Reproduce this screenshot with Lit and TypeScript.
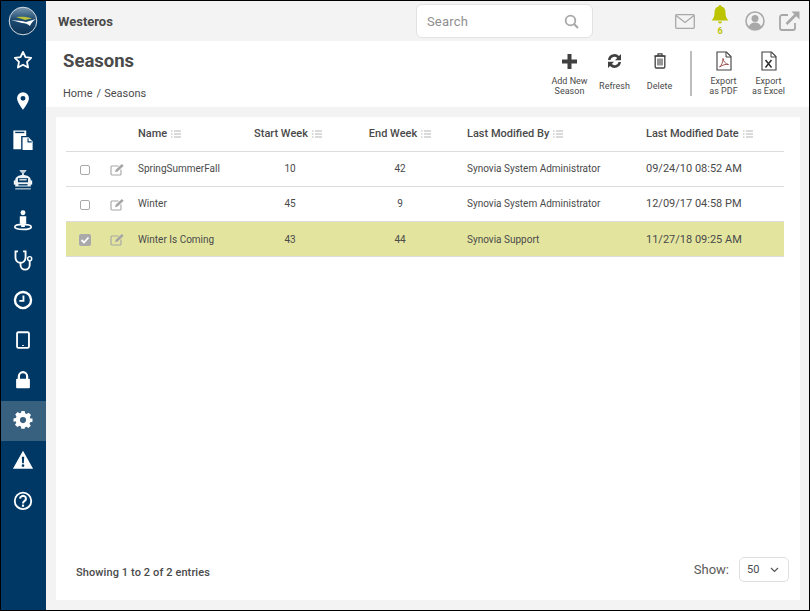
import { LitElement, html, css, svg } from "lit";
import { customElement } from "lit/decorators.js";

const navIcons = [
  svg`<path d="M12 3.200l2.700 5.700 6.200.8-4.500 4.300 1.100 6.200L12 17.200l-5.500 3 1.100-6.200L3.100 9.700l6.200-.8z" fill="none" stroke="#fff" stroke-width="2" stroke-linejoin="round"/>`,
  svg`<path fill-rule="evenodd" d="M12 3.500a6.500 6.500 0 0 0-6.500 6.500c0 4.400 6.500 12.500 6.500 12.500S18.500 14.400 18.500 10A6.500 6.500 0 0 0 12 3.500zm0 4a2.700 2.700 0 1 1 0 5.400 2.700 2.700 0 0 1 0-5.400z" fill="#fff"/>`,
  svg`<path d="M1.500 1.500h14v6H10v14.500H1.500z" fill="#fff"/><rect x="3.500" y="3" width="10" height="1.500" fill="#003865"/><path d="M11.500 9H18l4.500 4.500V23h-11z" fill="#fff"/><path d="M17.500 10v4h4" fill="none" stroke="#003865" stroke-width="1.200"/>`,
  svg`<path d="M8 1h8l-2 3h-4z" fill="#c8d3dc"/><rect x="11" y="4" width="2" height="3" fill="#dfe6eb"/><path d="M3.500 12c0-3 3.500-5.500 8.500-5.500s8.500 2.500 8.500 5.500v7h-17z" fill="#eef2f5"/><rect x="6.500" y="10" width="11" height="4.500" fill="#003865"/><rect x="8" y="11" width="8" height="1.500" fill="#dfe6eb"/><rect x="2" y="12.500" width="2" height="4.500" fill="#fff"/><rect x="20" y="12.500" width="2" height="4.500" fill="#fff"/><rect x="3.500" y="21" width="17" height="1.300" fill="#c8d3dc"/><rect x="7" y="16.500" width="10" height="1.500" fill="#003865"/>`,
  svg`<circle cx="12" cy="4" r="2.700" fill="#fff"/><path d="M8.500 8h7v8H14v3.500h-4V16H8.500z" fill="#fff"/><ellipse cx="12" cy="19.500" rx="9" ry="2.800" fill="none" stroke="#fff" stroke-width="1.800"/>`,
  svg`<path d="M6.500 2.500H3.800v7a5.500 5.500 0 0 0 11 0v-7h-2.700" fill="none" stroke="#fff" stroke-width="2"/><path d="M9.300 15v2.500a5 5 0 0 0 10 0V13" fill="none" stroke="#fff" stroke-width="2"/><circle cx="19.300" cy="10.500" r="2.200" fill="none" stroke="#fff" stroke-width="1.600"/>`,
  svg`<circle cx="12" cy="12" r="8.800" fill="none" stroke="#fff" stroke-width="2.600"/><path d="M12.500 7v6H8" fill="none" stroke="#fff" stroke-width="2"/>`,
  svg`<rect x="5.500" y="3.500" width="13" height="17" rx="1.500" fill="none" stroke="#fff" stroke-width="2"/><rect x="11" y="17.500" width="2" height="1" fill="#fff"/>`,
  svg`<path d="M7.500 11V8a4.500 4.500 0 0 1 9 0v3" fill="none" stroke="#fff" stroke-width="2.400"/><rect x="4.500" y="10.500" width="15" height="10.500" rx="1" fill="#fff"/>`,
  svg`<path fill-rule="evenodd" d="M10 2h4l.6 2.800 1.800.8 2.500-1.500 2.800 2.800-1.500 2.500.8 1.800L23.500 11v4l-2.800.6-.8 1.800 1.500 2.500-2.800 2.800-2.500-1.500-1.800.8L14 23.500h-4l-.6-2.800-1.800-.8-2.500 1.500-2.800-2.800 1.500-2.500-.8-1.800L.5 15v-4l2.800-.6.8-1.800L2.600 6.100l2.800-2.800 2.500 1.500 1.800-.8zM12 9.300a3.700 3.700 0 1 0 0 7.400 3.700 3.700 0 0 0 0-7.400z" fill="#fff" transform="translate(1.200 .4) scale(.9)"/>`,
  svg`<path fill-rule="evenodd" d="M12 2L23 21.500H1zM10.700 8.500l.4 7h1.800l.4-7zM12 16.500a1.500 1.500 0 1 0 0 3 1.500 1.500 0 0 0 0-3z" fill="#fff"/>`,
  svg`<circle cx="12" cy="13" r="9" fill="none" stroke="#fff" stroke-width="2"/><path d="M8.800 10.500a3.200 3 0 1 1 5 2.500c-1.200.8-1.800 1.300-1.800 2.800" fill="none" stroke="#fff" stroke-width="2.200"/><rect x="10.800" y="17" width="2.400" height="2.400" fill="#fff"/>`,
];

type Row = { name: string; start: string; end: string; by: string; date: string; sel?: boolean };
const rows: Row[] = [
  { name: "SpringSummerFall", start: "10", end: "42", by: "Synovia System Administrator", date: "09/24/10 08:52 AM" },
  { name: "Winter", start: "45", end: "9", by: "Synovia System Administrator", date: "12/09/17 04:58 PM" },
  { name: "Winter Is Coming", start: "43", end: "44", by: "Synovia Support", date: "11/27/18 09:25 AM", sel: true },
];

const sortIcon = html`<svg class="sort" viewBox="0 0 10 8" width="10" height="8"><path d="M0 1h1.500M0 4h1.500M0 7h1.500M3 1h7M3 4h7M3 7h7" stroke="#b5b5b5" stroke-width="1" fill="none"/></svg>`;
const editIcon = html`<svg class="edit" viewBox="0 0 15 13" width="15" height="13"><path d="M11 6.500V11a1 1 0 0 1-1 1H2a1 1 0 0 1-1-1V4a1 1 0 0 1 1-1h6.500" fill="none" stroke="#a5a5a5" stroke-width="1.100"/><path d="M5 9.300l.7-2.500L11.800 1l1.900 1.800-6.100 5.800z" fill="#a5a5a5"/></svg>`;

@customElement("app-root")
export class AppRoot extends LitElement {
  static styles = css`
    :host { display: block; width: 810px; height: 611px; font-family: Roboto, "Liberation Sans", sans-serif; color: #4a4a4a; }
    * { box-sizing: border-box; }
    .frame { width: 810px; height: 611px; border: 1px solid #000; display: flex; background: #f3f3f3; overflow: hidden; }
    .side { width: 45px; flex: none; background: #003865; display: flex; flex-direction: column; }
    .logo { height: 40px; display: flex; align-items: center; justify-content: center; padding-right: 1px; }
    .nav { height: 40px; display: flex; align-items: center; justify-content: center; }
    .nav svg { margin: -2px 1px 0 0; }
    .nav.active { background: #38607f; }
    .main { flex: 1; display: flex; flex-direction: column; min-width: 0; }
    .top { height: 40px; flex: none; display: flex; align-items: center; }
    .brand { margin-left: 12px; font-size: 13px; font-weight: 700; color: #4a4a4a; }
    .search { margin-left: 303px; width: 177px; height: 34px; background: #fff; border: 1px solid #e2e2e2; border-radius: 6px; display: flex; align-items: center; justify-content: space-between; padding: 0 13px 0 10px; font-size: 13px; color: #8f8f8f; letter-spacing: .2px; }
    .top-icons { margin-left: auto; display: flex; align-items: center; height: 40px; }
    .mail { margin-right: 15px; }
    .bell { margin: -4px 15px 0 0; }
    .user { margin-right: 14px; }
    .ext { margin-right: 9px; }
    .head { height: 66px; flex: none; background: #fff; display: flex; justify-content: space-between; }
    .titles { padding: 9px 0 0 17px; }
    h1 { margin: 0; font-size: 18.500px; font-weight: 700; line-height: 22px; color: #4a4a4a; }
    .crumb { margin-top: 15px; font-size: 11px; line-height: 14px; color: #4a4a4a; }
    .slash { margin: 0 3px 0 4px; }
    .actions { display: flex; padding-right: 18px; }
    .act { width: 45px; display: flex; flex-direction: column; align-items: center; font-size: 9px; line-height: 10px; text-align: center; color: #4a4a4a; padding-top: 10px; }
    .act svg { height: 20px; flex: none; margin-bottom: 5px; }
    .act.mid svg { margin-bottom: 10px; }
    .sep { width: 2px; height: 45px; background: #bdbdbd; margin: 10px 9px 0 8px; }
    .band { flex: 1; padding: 10px 9px 10px 10px; min-height: 0; }
    .card { height: 100%; background: #fff; padding: 0 16px 0 10px; display: flex; flex-direction: column; }
    .row { display: grid; grid-template-columns: 37px 28px 104px 110px 110px 179px 150px; align-items: center; height: 35px; border-bottom: 1px solid #dcdcdc; font-size: 10px; color: #4a4a4a; }
    .row.hd { font-size: 11px; font-weight: 500; padding-bottom: 2px; }
    .row.sel { background: #e3e59f; }
    .row > div { white-space: nowrap; }
    .row:not(.sel):not(.hd) .txt { padding-bottom: 1px; }
    .c { text-align: center; }
    .st { padding-right: 4px; }
    .n { padding-left: 7px; }
    .l { padding-left: 12px; }
    .date { font-size: 11px; }
    .sort { margin-left: 4px; vertical-align: -1px; }
    .ic { display: flex; justify-content: center; padding-top: 1px; }
    .box { width: 10px; height: 10px; border: 1px solid #a9a9a9; border-radius: 2px; background: #fff; display: block; }
    .box.on { width: 12px; height: 12px; background: #a9a9a9; border: none; }
    .box svg { display: block; }
    .foot { margin-top: auto; height: 43px; display: flex; justify-content: space-between; align-items: flex-start; padding-left: 10px; }
    .count { margin-top: 9px; font-size: 11px; font-weight: 500; letter-spacing: .1px; color: #4a4a4a; line-height: 14px; }
    .show { display: flex; align-items: center; gap: 10px; font-size: 13px; color: #5a5a5a; margin-right: -5px; }
    .sel-box { width: 50px; height: 25px; border: 1px solid #e0e0e0; border-radius: 5px; display: flex; align-items: center; justify-content: space-between; padding: 0 9px 0 7px; font-size: 11px; color: #4a4a4a; }
  `;

  render() {
    return html`<div class="frame">
      <nav class="side">
        <div class="logo">
          <svg width="30" height="30" viewBox="0 0 30 30">
            <defs><linearGradient id="g" x1="0" y1="0" x2="0" y2="1"><stop offset="0" stop-color="#7c99b0"/><stop offset=".45" stop-color="#1d4a70"/><stop offset="1" stop-color="#0c3357"/></linearGradient></defs>
            <circle cx="15" cy="15" r="13.800" fill="url(#g)" stroke="#d5dce2" stroke-width="1"/>
            <path d="M8 11c5-.5 12-.5 16 1.500l-7 1.500z" fill="#b9c23a"/>
            <path d="M3 14c6 .5 11 1 15 2l10-3c-3 2-5 4-6 7-2-2-5-3-8-3z" fill="#fff"/>
          </svg>
        </div>
        ${navIcons.map((p, i) => html`<div class="nav ${i === 9 ? "active" : ""}"><svg width="22" height="22" viewBox="0 0 24 24">${p}</svg></div>`)}
      </nav>
      <div class="main">
        <header class="top">
          <div class="brand">Westeros</div>
          <div class="search"><span>Search</span>
            <svg width="15" height="15" viewBox="0 0 15 15"><circle cx="6.500" cy="6.500" r="4.800" fill="none" stroke="#a8a8a8" stroke-width="1.800"/><path d="M10 10l4 4" stroke="#a8a8a8" stroke-width="2.200"/></svg>
          </div>
          <div class="top-icons">
            <svg class="mail" width="20" height="15" viewBox="0 0 20 15"><rect x=".7" y=".7" width="18.600" height="13.600" rx="1" fill="none" stroke="#a8a8a8" stroke-width="1.300"/><path d="M1 1.500l9 7 9-7" fill="none" stroke="#a8a8a8" stroke-width="1.300"/></svg>
            <svg class="bell" width="20" height="34" viewBox="0 0 20 34"><path d="M10 3a1.500 1.500 0 0 1 1.500 1.500c3 .8 4 3 4 6 0 4 1 6 3 8H1.500c2-2 3-4 3-8 0-3 1-5.200 4-6A1.500 1.500 0 0 1 10 3z" fill="#bcc400"/><path d="M8 19.500a2 2 0 0 0 4 0z" fill="#bcc400"/><text x="10" y="32" text-anchor="middle" font-size="9" font-weight="700" font-family="Roboto" fill="#bcc400">6</text></svg>
            <svg class="user" width="20" height="20" viewBox="0 0 20 20"><circle cx="10" cy="10" r="9" fill="none" stroke="#a8a8a8" stroke-width="1.600"/><circle cx="10" cy="7.500" r="3.500" fill="#a8a8a8"/><path d="M3.800 16c.7-3 3-4.500 6.200-4.500s5.500 1.500 6.200 4.500a9 9 0 0 1-12.400 0z" fill="#a8a8a8"/></svg>
            <svg class="ext" width="21" height="20" viewBox="0 0 21 20"><path d="M9 4H3a2 2 0 0 0-2 2v11a2 2 0 0 0 2 2h11a2 2 0 0 0 2-2v-5" fill="none" stroke="#a8a8a8" stroke-width="1.800"/><path d="M7.500 13L16.500 4" stroke="#a8a8a8" stroke-width="2.600" fill="none"/><path d="M12.500 .5H20.500V8.500z" fill="#a8a8a8"/></svg>
          </div>
        </header>
        <section class="head">
          <div class="titles"><h1>Seasons</h1><div class="crumb">Home<span class="slash">/</span>Seasons</div></div>
          <div class="actions">
            <div class="act"><svg width="15" viewBox="0 0 15 20"><path d="M5.500 3h4v5.500H15v4H9.500V18h-4v-5.500H0v-4h5.500z" fill="#404040"/></svg><span>Add New<br>Season</span></div>
            <div class="act mid"><svg width="17" viewBox="0 0 17 20"><path d="M2 9a6.500 6.500 0 0 1 11-4l2-2v6.200H9l2.200-2.300A4 4 0 0 0 4.500 9zM15 11a6.500 6.500 0 0 1-11 4l-2 2v-6.200h6l-2.200 2.300A4 4 0 0 0 12.500 11z" fill="#404040"/></svg><span>Refresh</span></div>
            <div class="act mid"><svg width="14" viewBox="0 0 14 20"><path d="M1 5h12M5 5V2.800h4V5" fill="none" stroke="#404040" stroke-width="1.200"/><rect x="2.200" y="5" width="9.600" height="12" rx="1" fill="none" stroke="#404040" stroke-width="1.300"/><path d="M5 7.500v7M7 7.500v7M9 7.500v7" stroke="#404040" stroke-width="1.100"/></svg><span>Delete</span></div>
            <div class="sep"></div>
            <div class="act"><svg width="16" viewBox="0 0 16 20"><path d="M1 1h9.500L15 5.500V19H1z" fill="#fff" stroke="#404040" stroke-width="1.100"/><path d="M10 1v5h5" fill="none" stroke="#404040"/><path d="M3.500 16c2-1.500 3.500-5 3.500-8.500.5 3 2.500 5.500 5.500 6-3-.5-6 .5-9 2.500z" fill="none" stroke="#8a3030" stroke-width=".8"/></svg><span>Export<br>as PDF</span></div>
            <div class="act"><svg width="16" viewBox="0 0 16 20"><path d="M1 1h9.500L15 5.500V19H1z" fill="#fff" stroke="#404040" stroke-width="1.100"/><path d="M10 1v5h5" fill="none" stroke="#404040"/><path d="M4.500 9l6 7.500M10.500 9l-6 7.500" stroke="#303030" stroke-width="1.500"/></svg><span>Export<br>as Excel</span></div>
          </div>
        </section>
        <div class="band">
          <div class="card">
            <div class="row hd">
              <div></div><div></div>
              <div class="n">Name${sortIcon}</div>
              <div class="c st">Start Week${sortIcon}</div>
              <div class="c">End Week${sortIcon}</div>
              <div class="l">Last Modified By${sortIcon}</div>
              <div class="l">Last Modified Date${sortIcon}</div>
            </div>
            ${rows.map((r) => html`<div class="row ${r.sel ? "sel" : ""}">
              <div class="ic">${r.sel
                ? html`<span class="box on"><svg width="12" height="12" viewBox="0 0 12 12"><path d="M2.500 6l2.500 2.500 4.500-5" fill="none" stroke="#fff" stroke-width="1.800"/></svg></span>`
                : html`<span class="box"></span>`}</div>
              <div class="ic">${editIcon}</div>
              <div class="n txt">${r.name}</div>
              <div class="c txt">${r.start}</div>
              <div class="c txt">${r.end}</div>
              <div class="l txt">${r.by}</div>
              <div class="l date txt">${r.date}</div>
            </div>`)}
            <div class="foot">
              <div class="count">Showing 1 to 2 of 2 entries</div>
              <div class="show"><span>Show:</span>
                <div class="sel-box"><span>50</span><svg width="9" height="6" viewBox="0 0 9 6"><path d="M1 1l3.500 3.500L8 1" fill="none" stroke="#555" stroke-width="1.200"/></svg></div>
              </div>
            </div>
          </div>
        </div>
      </div>
    </div>`;
  }
}
